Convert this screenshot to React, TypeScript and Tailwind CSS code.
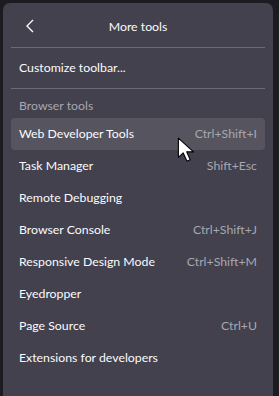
import React from "react";

const items: { label: string; shortcut?: string; hover?: boolean }[] = [
  { label: "Web Developer Tools", shortcut: "Ctrl+Shift+I", hover: true },
  { label: "Task Manager", shortcut: "Shift+Esc" },
  { label: "Remote Debugging" },
  { label: "Browser Console", shortcut: "Ctrl+Shift+J" },
  { label: "Responsive Design Mode", shortcut: "Ctrl+Shift+M" },
  { label: "Eyedropper" },
  { label: "Page Source", shortcut: "Ctrl+U" },
  { label: "Extensions for developers" },
];

const App = () => {
  return (
    <div
      className="relative w-[279px] h-[396px] overflow-hidden bg-[#1c1b22] pl-[3px] pt-[3px] pr-[6px]"
      style={{ fontFamily: 'Lato, "Noto Sans", sans-serif' }}
    >
      <div className="h-full rounded-t-[7px] bg-[#42414d] px-[8px] text-[12.3px] text-[#fbfbfe]">
        <div className="relative flex h-[44px] items-center justify-center pt-[4px]">
          <svg
            className="absolute left-[14px] top-[16px]"
            width="10"
            height="14"
            viewBox="0 0 10 14"
            fill="none"
            stroke="#fbfbfe"
            strokeWidth="1.4"
          >
            <path d="M8 1 L2 7 L8 13" />
          </svg>
          <span>More tools</span>
        </div>
        <div className="h-px bg-[#6b6a75]" />
        <div className="flex h-[40px] items-center px-[8px]">Customize toolbar...</div>
        <div className="h-px bg-[#6b6a75]" />
        <div className="flex h-[26px] items-end px-[8px] text-[#a8a7b0]">Browser tools</div>
        <div className="mt-[3px] flex flex-col">
          {items.map((it) => (
            <div
              key={it.label}
              className={`flex h-[32px] items-center justify-between rounded-[4px] px-[8px] ${
                it.hover ? "bg-[#55545f]" : ""
              }`}
            >
              <span>{it.label}</span>
              {it.shortcut && <span className="text-[#a8a7b0]">{it.shortcut}</span>}
            </div>
          ))}
        </div>
      </div>
      <svg
        className="absolute left-[177px] top-[137px]"
        width="20"
        height="28"
        viewBox="0 0 18 26"
      >
        <path
          d="M1 1 L1 19 L5.5 14.8 L9 22.5 L12 21.2 L8.7 13.8 L15 13.8 Z"
          fill="#ffffff"
          stroke="#000000"
          strokeWidth="1"
          strokeLinejoin="round"
        />
      </svg>
    </div>
  );
};

export default App;
